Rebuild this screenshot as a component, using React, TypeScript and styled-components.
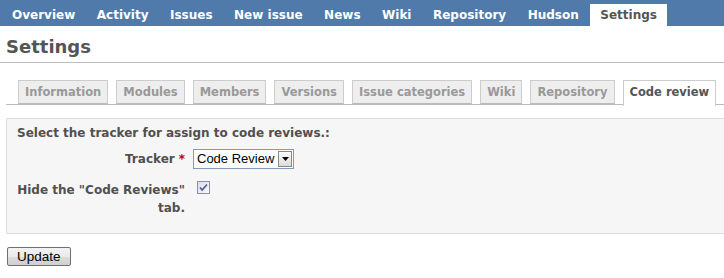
import React from "react";
import styled, { createGlobalStyle } from "styled-components";

const Global = createGlobalStyle`
  html, body { margin: 0; padding: 0; background: #fff; }
  body { font-family: "DejaVu Sans", Verdana, sans-serif; font-size: 12px; color: #333; width: 724px; height: 278px; overflow: hidden; }
`;

const MainMenu = styled.nav`
  background: #507aaa;
  height: 26px;
  display: flex;
  align-items: flex-end;
  padding-left: 2px;
`;

const MenuItem = styled.a<{ $selected?: boolean }>`
  display: block;
  height: 22px;
  line-height: 23px;
  padding: 0 10px;
  margin-right: 1.5px;
  font-size: 12px;
  font-weight: bold;
  text-decoration: none;
  color: ${(p) => (p.$selected ? "#555" : "#fff")};
  background: ${(p) => (p.$selected ? "#fff" : "transparent")};
`;

const Content = styled.main`
  padding: 0 0 0 6px;
`;

const Title = styled.h2`
  margin: 9px 0 0 -6px;
  padding: 0 0 4px 6px;
  font-size: 18px;
  font-weight: bold;
  color: #555;
  border-bottom: 1px solid #bbb;
  line-height: 23px;
`;

const Tabs = styled.ul`
  list-style: none;
  margin: 16px 0 0 0;
  padding: 0 0 0 12px;
  display: flex;
  gap: 8px;
  border-bottom: 1px solid #bbb;
  height: 25px;
`;

const Tab = styled.li<{ $selected?: boolean }>`
  height: ${(p) => (p.$selected ? "26px" : "24px")};
  box-sizing: border-box;
  border: 1px solid #ccc;
  border-bottom: ${(p) => (p.$selected ? "none" : "1px solid #bbb")};
  background: ${(p) => (p.$selected ? "#fff" : "#eee")};
  color: ${(p) => (p.$selected ? "#555" : "#999")};
  font-size: 11.5px;
  font-weight: bold;
  line-height: 22px;
  padding: 0 6px;
  white-space: nowrap;
  align-self: flex-start;
  margin-top: 1px;
`;

const Box = styled.div`
  margin-top: 13px;
  background: #f6f6f6;
  border: 1px solid #ddd;
  border-right: none;
  padding: 6px 10px 10px;
  height: 98px;
`;

const Legend = styled.p`
  margin: 0 0 7px;
  font-weight: bold;
  color: #505050;
  font-size: 12px;
  line-height: 16px;
`;

const Row = styled.div`
  display: flex;
  align-items: flex-start;
  margin-bottom: 10px;
`;

const Label = styled.label`
  width: 168px;
  text-align: right;
  font-weight: bold;
  color: #505050;
  font-size: 12px;
  line-height: 18px;
  padding-top: 2px;
  margin-right: 8px;
`;

const Star = styled.span`
  color: #bb0000;
  margin-left: 4px;
`;

const SelectBox = styled.div`
  display: flex;
  align-items: stretch;
  height: 20px;
  box-sizing: border-box;
  border: 1px solid #7f9db9;
  background: #fff;
  font-family: "Liberation Sans", Arial, sans-serif;
  font-size: 13px;
  color: #000;
  margin-top: 1px;
`;

const SelectText = styled.span`
  padding: 0 3px;
  line-height: 18px;
`;

const SelectArrow = styled.span`
  width: 14px;
  margin: 1px;
  border: 1px solid #888;
  background: linear-gradient(#fbfbfb, #dcdcdc);
  display: flex;
  align-items: center;
  justify-content: center;
  box-sizing: border-box;
`;

const Check = styled.span`
  width: 13px;
  height: 13px;
  box-sizing: border-box;
  border: 1px solid #8e8fa6;
  background: linear-gradient(135deg, #dcdce4, #fafafa);
  display: flex;
  align-items: center;
  justify-content: center;
  margin-top: 2px;
  margin-left: 4px;
`;

const Button = styled.button`
  margin-top: 13px;
  margin-left: 1px;
  height: 19px;
  padding: 0 9px;
  font-family: "Liberation Sans", Arial, sans-serif;
  font-size: 13.5px;
  color: #000;
  border: 1px solid #707070;
  border-radius: 2px;
  background: linear-gradient(#f2f2f2 0%, #ebebeb 50%, #dddddd 51%, #cfcfcf 100%);
  line-height: 16px;
`;

const menu = ["Overview", "Activity", "Issues", "New issue", "News", "Wiki", "Repository", "Hudson", "Settings"];
const tabs = ["Information", "Modules", "Members", "Versions", "Issue categories", "Wiki", "Repository", "Code review"];

export default function App() {
  return (
    <>
      <Global />
      <MainMenu>
        {menu.map((m) => (
          <MenuItem key={m} $selected={m === "Settings"}>{m}</MenuItem>
        ))}
      </MainMenu>
      <Content>
        <Title>Settings</Title>
        <Tabs>
          {tabs.map((t) => (
            <Tab key={t} $selected={t === "Code review"}>{t}</Tab>
          ))}
        </Tabs>
        <Box>
          <Legend>Select the tracker for assign to code reviews.:</Legend>
          <Row>
            <Label>Tracker<Star>*</Star></Label>
            <SelectBox>
              <SelectText>Code Review</SelectText>
              <SelectArrow>
                <svg width="7" height="4" viewBox="0 0 7 4"><path d="M0 0h7L3.5 4z" fill="#000" /></svg>
              </SelectArrow>
            </SelectBox>
          </Row>
          <Row>
            <Label>Hide the "Code Reviews" tab.</Label>
            <Check>
              <svg width="9" height="9" viewBox="0 0 9 9"><path d="M1 4.5l2.2 2.5L8 1.5" stroke="#4a5a9a" strokeWidth="1.6" fill="none" /></svg>
            </Check>
          </Row>
        </Box>
        <Button>Update</Button>
      </Content>
    </>
  );
}
